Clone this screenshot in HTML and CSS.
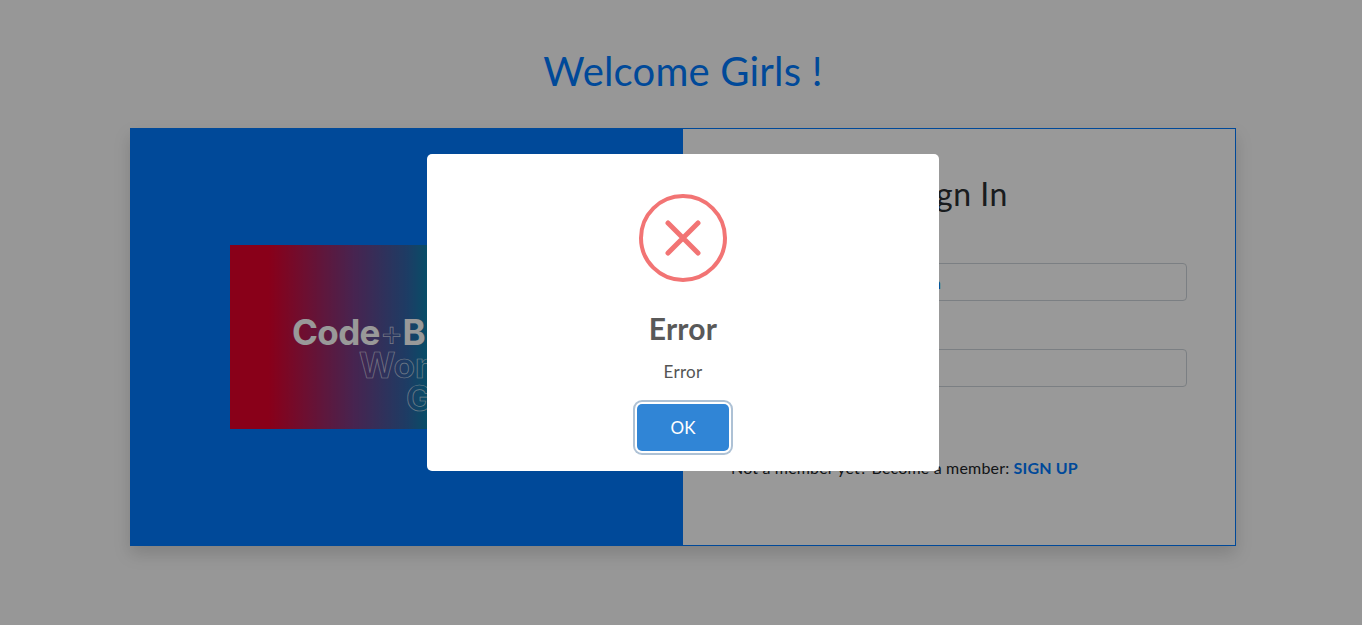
FILE: index.html
```html
<!DOCTYPE html>
<html lang="en">
<head>
<meta charset="utf-8">
<title>Welcome Girls</title>
<link rel="stylesheet" href="styles.css">
</head>
<body>
<main class="page">
  <h1 class="welcome">Welcome Girls !</h1>
  <section class="card">
    <div class="card-left">
      <div class="banner">
        <div class="banner-title">Code<span class="plus">+</span>B</div>
        <div class="banner-outline banner-wom">Wom</div>
        <div class="banner-outline banner-g">G</div>
      </div>
    </div>
    <div class="card-right">
      <h2 class="signin-title">Sign In</h2>
      <form class="signin-form">
        <div class="field"><input class="input input-email" type="text" value="a@gmail.com" aria-label="Email"></div>
        <div class="field"><input class="input" type="password" aria-label="Password"></div>
      </form>
      <p class="member">Not a member yet? Become a member: <a class="member-link" href="#">SIGN UP</a></p>
    </div>
  </section>
</main>
<div class="overlay">
  <div class="modal">
    <svg class="error-icon" width="88" height="88" viewBox="0 0 88 88">
      <circle cx="44" cy="44" r="42" fill="none" stroke="#f27474" stroke-width="4"/>
      <path d="M29 29 L59 59 M59 29 L29 59" fill="none" stroke="#f27474" stroke-width="5" stroke-linecap="round"/>
    </svg>
    <h2 class="modal-title">Error</h2>
    <p class="modal-text">Error</p>
    <button class="modal-ok" type="button">OK</button>
  </div>
</div>
</body>
</html>
```
FILE: styles.css
```css
* { box-sizing: border-box; }
html, body { margin: 0; height: 100%; }
body {
  background: #fcfcfc;
  font-family: Lato, "Open Sans", sans-serif;
  color: #212529;
  overflow: hidden;
}
.page { padding: 0 126px 0 130px; }
.welcome {
  margin: 0;
  padding-top: 48px;
  height: 128px;
  text-align: center;
  font-weight: 400;
  font-size: 40px;
  line-height: 46px;
  letter-spacing: .2px;
  color: #007bff;
}
.card {
  display: flex;
  height: 418px;
  background: #fff;
  border: 1px solid #007bff;
  box-shadow: 0 8px 16px rgba(0, 0, 0, .15);
}
.card-left {
  flex: 0 0 552px;
  background: #007bff;
  display: flex;
  align-items: center;
  padding-left: 99px;
}
.banner {
  width: 353px;
  height: 184px;
  background: linear-gradient(90deg, #e4002b 0, #e4002b 11%, #783c85 35%, #3264a7 50%, #008cb0 58%, #0093b0 100%);
  padding: 71px 0 0 62px;
}
.banner-title,
.banner-outline {
  font-family: Inter, "Liberation Sans", sans-serif;
  font-weight: 700;
  font-size: 35px;
  line-height: 33px;
}
.banner-title { color: #fff; letter-spacing: -.6px; }
.plus { font-weight: 400; color: transparent; -webkit-text-stroke: .7px rgba(255, 255, 255, .7); }
.banner-outline { color: transparent; -webkit-text-stroke: .7px rgba(255, 255, 255, .7); }
.banner-wom { padding-left: 67px; }
.banner-g { padding-left: 114px; }
.card-right { flex: 1; padding: 45px 48px 0 48px; }
.signin-title {
  margin: 0 0 49px;
  text-align: center;
  font-weight: 400;
  font-size: 32px;
  line-height: 40px;
  letter-spacing: .5px;
  color: #2b2f33;
}
.signin-form { height: 194px; }
.field { height: 86px; }
.input {
  width: 100%;
  height: 38px;
  border: 1px solid #ced4da;
  border-radius: 4px;
  padding: 0 12px;
  background: #fff;
  font: 16px Lato, sans-serif;
  color: #007bff;
}
.input-email { padding-left: 117px; }
.member { margin: 0; font-size: 16px; line-height: 22px; letter-spacing: .17px; white-space: nowrap; }
.member-link { color: #007bff; font-weight: 700; text-decoration: none; }
.overlay {
  position: fixed;
  inset: 0;
  background: rgba(0, 0, 0, .4);
  display: flex;
  justify-content: center;
  align-items: flex-start;
  padding: 154px 0 0 4px;
}
.modal {
  width: 512px;
  height: 317px;
  background: #fff;
  border-radius: 5px;
  padding-top: 40px;
  display: flex;
  flex-direction: column;
  align-items: center;
}
.error-icon { display: block; }
.modal-title {
  margin: 27px 0 0;
  font-size: 30px;
  font-weight: 700;
  line-height: 38px;
  letter-spacing: .2px;
  color: #595959;
}
.modal-text {
  margin: 13px 0 0;
  font-size: 17px;
  line-height: 24px;
  letter-spacing: .3px;
  color: #545454;
}
.modal-ok {
  margin-top: 20px;
  width: 92px;
  height: 47px;
  border: 0;
  border-radius: 5px;
  background: #3085d6;
  color: #fff;
  font: 17px Lato, sans-serif;
  box-shadow: 0 0 0 2px #fff, 0 0 0 4px rgba(50, 100, 150, .4);
}
```
